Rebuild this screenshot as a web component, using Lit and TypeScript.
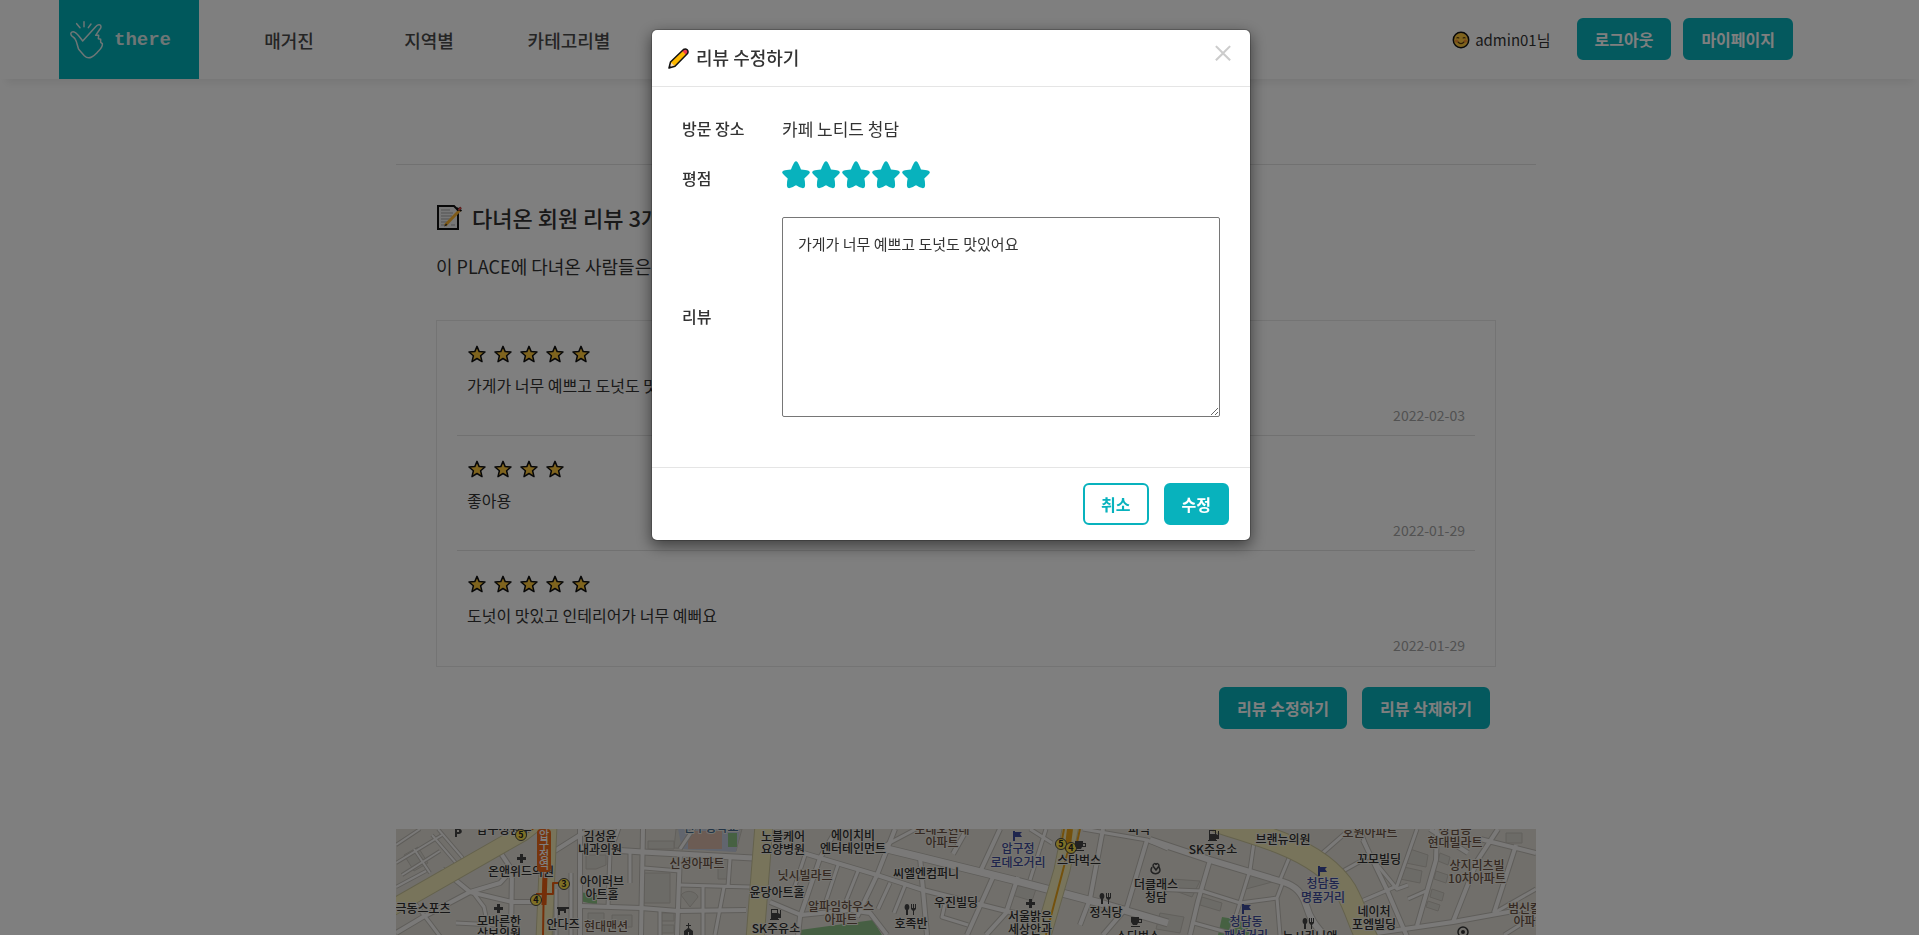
import { LitElement, html, svg, css } from "lit";
import { customElement, property, state } from "lit/decorators.js";

const sharedButton = css`
  .btn {
    box-sizing: border-box;
    height: 42px;
    padding: 0 16px;
    border: 2px solid #08b2bd;
    border-radius: 6px;
    background: #08b2bd;
    color: #fff;
    font: 700 16px/24px "Noto Sans CJK KR", sans-serif;
    cursor: pointer;
    white-space: nowrap;
  }
  .btn.outline {
    background: #fff;
    color: #08b2bd;
  }
`;

@customElement("site-header")
export class SiteHeader extends LitElement {
  static styles = [
    sharedButton,
    css`
      :host {
        display: flex;
        align-items: center;
        height: 79px;
        padding: 0 126px 0 59px;
        background: #fff;
        box-shadow: 0 10px 8px -6px rgba(0, 0, 0, 0.07);
      }
      .logo {
        display: flex;
        align-items: center;
        gap: 10px;
        box-sizing: border-box;
        width: 140px;
        height: 100%;
        padding-left: 10px;
        background: #00b1b8;
        color: #dcecec;
        font: 700 19px/24px "Liberation Mono", monospace;
        text-decoration: none;
      }
      .hand {
        width: 35px;
        height: 40px;
        fill: none;
        stroke: #dcecec;
        stroke-width: 4.5;
        stroke-linejoin: round;
        stroke-linecap: round;
      }
      nav {
        display: flex;
        flex: 1;
        margin-left: 20px;
      }
      nav a {
        width: 140px;
        text-align: center;
        color: #4a4a4a;
        font-size: 18px;
        font-weight: 500;
        line-height: 26px;
        text-decoration: none;
      }
      .user {
        display: flex;
        align-items: center;
        gap: 5px;
        margin-right: 26px;
        font-size: 15px;
        line-height: 24px;
      }
      .user svg {
        width: 18px;
        height: 18px;
      }
      .actions {
        display: flex;
        align-self: flex-start;
        gap: 12px;
        padding-top: 18px;
      }
    `,
  ];

  render() {
    return html`
      <a class="logo" href="#" aria-label="there">
        <svg class="hand" viewBox="42 60 105 120">
          <path
            d="M48 104C45 97 53 93 60 97C68 101 74 112 83 123L124 78C129 72 138 73 138 80C138 83 137 85 135 87L122 106L131 106L130 116L137 118L137 127L142 131C144 140 136 148 130 154C122 162 117 168 110 171C102 175 94 173 88 167L71 148C67 138 66 126 61 118C57 111 50 110 48 104Z"
          />
          <path d="M65 71L75 83M87 65V80M108 72L100 83" />
        </svg>
        there
      </a>
      <nav>
        <a href="#">매거진</a>
        <a href="#">지역별</a>
        <a href="#">카테고리별</a>
      </nav>
      <span class="user">
        <svg viewBox="0 0 18 18" aria-hidden="true">
          <circle cx="9" cy="9" r="7.7" fill="#ffc83d" stroke="#111" stroke-width="1.5" />
          <path
            d="M4.6 7.4Q5.8 5.6 7.2 7.4M10.8 7.4Q12.2 5.6 13.4 7.4M5.6 10.6Q9 14.6 12.4 10.6"
            fill="none"
            stroke="#5a3a10"
            stroke-width="1.1"
          />
          <circle cx="4.6" cy="10" r="1.6" fill="#f4782f" opacity=".7" />
          <circle cx="13.4" cy="10" r="1.6" fill="#f4782f" opacity=".7" />
        </svg>
        admin01님
      </span>
      <div class="actions">
        <button class="btn" type="button">로그아웃</button>
        <button class="btn" type="button">마이페이지</button>
      </div>
    `;
  }
}

interface Review {
  stars: number;
  text: string;
  date: string;
}

@customElement("review-list")
export class ReviewList extends LitElement {
  @property({ attribute: false }) reviews: Review[] = [];

  static styles = css`
    :host {
      display: block;
      padding: 0 20px;
      border: 1px solid #e8e8e8;
    }
    .item {
      display: flex;
      flex-direction: column;
      box-sizing: border-box;
      height: 115px;
      padding: 24px 10px 0;
      border-bottom: 1px solid #e3e3e3;
    }
    .item:last-child {
      border-bottom-color: transparent;
    }
    .stars {
      display: flex;
      gap: 8px;
      padding-left: 1px;
    }
    .stars svg {
      width: 18px;
      height: 18px;
    }
    p {
      margin: 10px 0 8px;
      font-size: 16px;
      line-height: 24px;
    }
    time {
      align-self: flex-end;
      color: #a4a4a4;
      font-size: 14px;
      line-height: 20px;
    }
  `;

  render() {
    return this.reviews.map(
      (r) => html`
        <article class="item">
          <div class="stars" role="img" aria-label="${r.stars}점">
            ${Array.from(
              { length: r.stars },
              () => html`<svg viewBox="0 0 18 18">
                <path
                  d="M9 1.4L11.2 6.6L17 7L12.6 10.8L14 16.6L9 13.5L4 16.6L5.4 10.8L1 7L6.8 6.6Z"
                  fill="#ffc83d"
                  stroke="#111"
                  stroke-width="1.5"
                  stroke-linejoin="round"
                />
              </svg>`
            )}
          </div>
          <p>${r.text}</p>
          <time>${r.date}</time>
        </article>
      `
    );
  }
}

const YELLOW_ROADS: [string, number][] = [
  ["M-6 80L127 4L140 -6", 15],
  ["M153 -4L148 110", 15],
  ["M368 -4L359 110", 17],
  ["M675 -4L666 41L646 110", 15],
  ["M820 -8C850 2 870 8 885 14C915 26 938 42 950 62C960 80 962 92 972 112", 21],
];

const ROADS: [string, number][] = [
  ["M487 19L524 28L617 51L704 74L772 94", 7],
  ["M484 19L520 0", 3],
  ["M374 14L424 29L481 46L527 61L614 83L640 88", 4],
  ["M754 11L814 31L887 53C900 57 906 64 910 76C914 90 920 98 930 108", 6],
  ["M967 106L1057 93L1140 78", 4],
  ["M967 11L991 61L1012 110", 4],
  ["M104 23L116 41L115 106", 4],
  ["M0 104L27 88L74 63L104 54L116 41", 4],
  ["M46 40L74 63L116 73L141 73", 4],
  ["M14 68L34 94L46 110", 3],
  ["M157 23L184 6L200 -4", 4],
  ["M184 0V106", 4],
  ["M184 19L247 23L357 29", 5],
  ["M247 0L245 106", 4],
  ["M214 24L212 78M234 24V54", 3],
  ["M185 77L245 79L282 82L350 81", 4],
  ["M284 24L281 106", 4],
  ["M248 39L284 42M284 56L354 58M334 30L332 58M328 58L319 106M307 58V106M264 80V106", 3],
  ["M300 -4L284 20M224 -4L214 24", 3],
  ["M441 0L424 29L404 88L402 106", 4],
  ["M499 0L481 46L461 88", 4],
  ["M524 28L527 61L531 106", 4],
  ["M374 73L405 86L454 81L474 84L491 106", 4],
  ["M410 23L396 66M442 36L428 78M462 42L446 82M510 54L498 84M494 54L482 80", 3],
  ["M557 25L571 0M585 41L604 0M597 48L571 106M622 48L610 84L590 106", 4],
  ["M650 0L634 51M634 0L656 14", 3],
  ["M707 0L694 70L684 96", 4],
  ["M751 11L731 78L707 106", 4],
  ["M687 0L751 11L772 20M550 70L546 88L572 96", 3],
  ["M814 31L802 72L794 106", 4],
  ["M854 41L858 13M884 51L896 22", 3],
  ["M754 60L806 62L844 74L881 69L884 106M881 69L887 53M854 41L834 106M798 94L834 104", 3],
  ["M921 29L954 0M947 42L974 27L966 6M961 74L1001 57L1021 0", 3],
  ["M1041 0L1040 31L1021 97M1034 0L1072 24M1102 0L1081 32L1057 93M1084 10L1140 24M1120 16L1098 84", 4],
  ["M1098 84L1140 60M1012 70L1030 62M1108 106L1140 86M974 27L1001 60L1012 56", 3],
  ["M42 0L66 28C70 34 64 38 60 34L36 6", 2],
  ["M0 16L24 0M0 34L46 6M6 46L44 22M0 58L30 42M18 20L34 44", 2],
  ["M76 62L88 78L94 106M60 94L100 96M160 60V106M175 44V106", 3],
];

const BUILDINGS = [
  "M280 0L278 19L340 22L346 0Z",
  "M190 26H210V36L200 40H190Z",
  "M192 84H208V96H192ZM216 86H236V98H216Z",
  "M285 66C290 60 300 62 302 68L294 78Z",
  "M246 44H274V74H248Z",
  "M252 12H278V20H252Z",
  "M322 30H332V50H322Z",
  "M265 84H278V92H265ZM265 96H278V104H265Z",
  "M618 56L640 60L636 72L616 66Z",
  "M776 50L804 52L796 68L774 60Z",
  "M806 68L826 74L824 82L804 76Z",
  "M764 84L788 88L784 104L760 100Z",
  "M850 60L856 40L880 52Z",
  "M1014 20L1032 26L1030 38L1010 34ZM1008 38L1026 42L1024 54L1004 50Z",
  "M1044 24L1054 28L1052 36L1042 32ZM1040 42L1052 46L1050 54L1038 50ZM1036 60L1048 64L1046 72L1034 68ZM1032 72L1044 76L1042 82L1030 78Z",
  "M1110 4H1126V14H1110Z",
  "M8 26L22 18L32 34L18 42Z",
];

const INK = "#2e2e2e";
const BROWN = "#6b5344";
const BLUE = "#3d4a9a";

// x, y (baseline), text, colour
const LABELS: [number, number, string, string][] = [
  [108, 5, "압구정원두", INK],
  [125, 47, "온앤위드의원", INK],
  [27, 84, "극동스포츠", INK],
  [103, 97, "모바른한", INK],
  [103, 109, "삼보의원", INK],
  [204, 12, "김성윤", INK],
  [204, 25, "내과의원", INK],
  [206, 57, "아이러브", INK],
  [206, 70, "아트홀", INK],
  [167, 100, "안다즈", INK],
  [210, 102, "현대맨션", BROWN],
  [301, 39, "신성아파트", BROWN],
  [315, 3, "신구중학교", "#44688c"],
  [387, 12, "노블케어", INK],
  [387, 25, "요양병원", INK],
  [381, 68, "윤당아트홀", INK],
  [380, 104, "SK주유소", INK],
  [457, 11, "에이치비", INK],
  [457, 24, "엔터테인먼트", INK],
  [409, 51, "닛시빌라트", BROWN],
  [445, 82, "알파임하우스", BROWN],
  [445, 95, "아파트", BROWN],
  [515, 99, "호족반", INK],
  [546, 5, "로데오현대", BROWN],
  [546, 18, "아파트", BROWN],
  [530, 49, "씨엘엔컴퍼니", INK],
  [560, 78, "우진빌딩", INK],
  [622, 24, "압구정", BLUE],
  [622, 38, "로데오거리", BLUE],
  [634, 92, "서울밝은", INK],
  [634, 105, "세상안과", INK],
  [683, 36, "스타벅스", INK],
  [743, 5, "피넉", INK],
  [760, 60, "더클래스", INK],
  [760, 73, "청담", INK],
  [710, 88, "정식당", INK],
  [742, 112, "스타벅스", INK],
  [817, 25, "SK주유소", INK],
  [887, 15, "브랜뉴의원", INK],
  [974, 8, "호원아파트", BROWN],
  [983, 35, "꼬모빌딩", INK],
  [1059, 5, "청담동", BROWN],
  [1059, 18, "현대빌라트", BROWN],
  [1081, 41, "상지리츠빌", BROWN],
  [1081, 54, "10차아파트", BROWN],
  [927, 59, "청담동", BLUE],
  [927, 73, "명품거리", BLUE],
  [850, 97, "청담동", BLUE],
  [850, 111, "패션거리", BLUE],
  [978, 87, "네이처", INK],
  [978, 100, "포엠빌딩", INK],
  [914, 112, "뉴시카나앤", INK],
  [1134, 84, "범신칼라", BROWN],
  [1134, 97, "아파트", BROWN],
];

const EXITS: [number, number, string][] = [
  [125, 6, "5"],
  [168, 55, "3"],
  [140, 71, "4"],
  [665, 15, "5"],
  [675, 19, "4"],
];

@customElement("place-map")
export class PlaceMap extends LitElement {
  static styles = css`
    :host {
      display: block;
      overflow: hidden;
      background: #e2dfd7;
    }
    svg {
      display: block;
      width: 100%;
    }
    .road {
      fill: none;
      stroke-linejoin: round;
    }
    .name {
      font: 500 12px "Noto Sans CJK KR", sans-serif;
      text-anchor: middle;
      paint-order: stroke;
      stroke: #ebe8e0;
      stroke-width: 2;
      stroke-linejoin: round;
    }
    .exit {
      font: 700 9px "Noto Sans CJK KR", sans-serif;
      text-anchor: middle;
      fill: #222;
    }
    .station {
      font: 500 11px "Noto Sans CJK KR", sans-serif;
      text-anchor: middle;
      fill: #fff;
    }
  `;

  private road(list: [string, number][], edge: string, fill: string) {
    return svg`
      ${list.map(([d, w]) => svg`<path class="road" d=${d} stroke=${edge} stroke-width=${w + 2}></path>`)}
      ${list.map(([d, w]) => svg`<path class="road" d=${d} stroke=${fill} stroke-width=${w}></path>`)}
    `;
  }

  private icon(x: number, y: number, d: string, fill = "#444") {
    return svg`<path d=${d} fill=${fill} transform="translate(${x} ${y})"></path>`;
  }

  render() {
    const cross = "M3 0H6V3H9V6H6V9H3V6H0V3H3Z";
    const cup = "M0 0H8V2H11V6H7L6 8H2L0 5ZM8 3V5H10V3ZM0 9H9V10H0Z";
    const fork = "M2 0C5 0 5 5 3 6V11H1V6C-1 5-1 0 2 0ZM6 0H7V4H8V0H9V4H10V0H11V5L9 7V11H8V7L6 5Z";
    const pump = "M0 0H7V4L9 5V1H10V9H7V10H8V11H-1V10H0ZM1 1V4H6V1Z";
    const flag = "M0 0H2V1H9L7 3L9 6H2V10H0Z";
    return html`
      <svg viewBox="0 0 1140 106" role="img" aria-label="지도">
        <rect width="1140" height="106" fill="#e2dfd7" />
        ${BUILDINGS.map((d) => svg`<path d=${d} fill="#d9d6ce" stroke="#c4c0b8" stroke-width="1"></path>`)}
        <path d="M282 0L286 20L340 23L344 0Z" fill="#c3cbdc" />
        <path d="M292 2H326V20H292Z" fill="#d8b8a8" />
        <path d="M332 4H341V18H332ZM184 63L201 66V76L184 72ZM826 88L850 92L854 106H822Z" fill="#8cc384" />
        <path d="M404 101L477 91L486 106H403Z" fill="#8cbf86" />
        ${this.road(ROADS, "#bfbbb4", "#f4f3f1")}
        ${this.road(YELLOW_ROADS, "#c9c39a", "#f0e9b6")}
        <path class="road" d="M148 0V46L147 106" stroke="#ea5f12" stroke-width="2" />
        <path class="road" d="M149 46L148 76" stroke="#ea5f12" stroke-width="5" />
        <path class="road" d="M140 65H157V54H166M132 3L142 -4" stroke="#ea5f12" stroke-width="2" />
        <path class="road" d="M668 0L665 16L672 22L680 18L684 0M672 22L650 106" stroke="#e9a31a" stroke-width="2" />
        <path class="road" d="M674 0L672 16" stroke="#e9a31a" stroke-width="6" />
        ${LABELS.map(([x, y, t, c]) => svg`<text class="name" x=${x} y=${y} fill=${c}>${t}</text>`)}
        <rect x="141" y="0" width="14" height="43" rx="4" fill="#ee6a1c" />
        ${["압", "구", "정", "역"].map(
          (c, i) => svg`<text class="station" x="148" y=${10 + i * 10}>${c}</text>`
        )}
        ${EXITS.map(
          ([x, y, n]) => svg`
            <circle cx=${x} cy=${y} r="5.5" fill="#ffe14a" stroke="#444" stroke-width="1"></circle>
            <text class="exit" x=${x} y=${y + 3}>${n}</text>`
        )}
        ${this.icon(121, 25, cross)} ${this.icon(98, 75, cross)} ${this.icon(630, 70, cross)}
        ${this.icon(161, 78, "M0 0H12V2H9V6H7V4H3V8H1V2H0Z")}
        ${this.icon(287, 94, "M5 0H6V2H8V3H6V5L10 8V12H6V9H5V12H1V8L5 5V3H3V2H5Z")}
        ${this.icon(59, 0, "M0 0H5C8 1 7 5 4 5H2V8H0ZM2 1V3H4V1Z")}
        ${this.icon(375, 80, pump)} ${this.icon(813, 1, pump)}
        ${this.icon(509, 75, fork)} ${this.icon(704, 64, fork)} ${this.icon(907, 89, fork)}
        ${this.icon(679, 12, cup)} ${this.icon(735, 88, cup)}
        ${this.icon(617, 2, flag, BLUE)} ${this.icon(922, 37, flag, BLUE)}
        ${this.icon(846, 75, flag, BLUE)}
        <path
          d="M756 38C751 47 768 47 763 38M760 41L757 37C757 34 760 34 760 36C760 34 763 34 763 37Z"
          fill="none"
          stroke="#444"
          stroke-width="1.5"
        />
        <circle cx="1067" cy="103" r="5" fill="none" stroke="#333" stroke-width="1.5" />
        <circle cx="1067" cy="103" r="2" fill="#333" />
      </svg>
    `;
  }
}

@customElement("review-dialog")
export class ReviewDialog extends LitElement {
  @state() private rating = 5;

  static styles = [
    sharedButton,
    css`
      :host {
        position: fixed;
        inset: 0;
        box-sizing: border-box;
        padding: 29px 17px 0 0;
        background: rgba(0, 0, 0, 0.5);
      }
      .dialog {
        box-sizing: border-box;
        max-width: 600px;
        margin: 0 auto;
        border: 1px solid rgba(0, 0, 0, 0.2);
        border-radius: 6px;
        background: #fff;
        background-clip: padding-box;
        box-shadow: 0 5px 15px rgba(0, 0, 0, 0.5);
        color: #333;
      }
      header {
        display: flex;
        align-items: center;
        gap: 7px;
        height: 56px;
        padding: 0 15px 0 16px;
        border-bottom: 1px solid #e5e5e5;
      }
      header svg {
        width: 21px;
        height: 21px;
      }
      h4 {
        flex: 1;
        margin: 0;
        padding-bottom: 2px;
        font-size: 18px;
        font-weight: 500;
        line-height: 26px;
      }
      .close {
        height: 36px;
        margin-bottom: 12px;
        padding: 0;
        border: 0;
        background: none;
        color: #ccc;
        font: 500 24px/36px "Noto Sans CJK KR", sans-serif;
        cursor: pointer;
      }
      .form {
        display: grid;
        grid-template-columns: 100px 1fr;
        grid-template-rows: 24px 48px auto;
        row-gap: 14px;
        align-items: center;
        margin: 0;
        padding: 30px 30px 50px;
      }
      .label {
        padding-bottom: 1px;
        font-size: 16px;
        font-weight: 500;
        line-height: 23px;
      }
      .place {
        font-size: 17px;
        line-height: 24px;
      }
      .rating {
        display: flex;
        align-self: start;
        gap: 2px;
        padding-top: 6px;
      }
      .rating label {
        display: grid;
        cursor: pointer;
      }
      .rating input,
      .rating svg {
        grid-area: 1 / 1;
        width: 28px;
        height: 28px;
        margin: 0;
      }
      .rating input {
        opacity: 0;
      }
      .rating path {
        fill: #ddd;
      }
      .rating .on path {
        fill: #08b2bd;
      }
      textarea {
        display: block;
        box-sizing: border-box;
        width: 100%;
        height: 200px;
        padding: 15px;
        border: 1px solid #767676;
        border-radius: 2px;
        background: #fff;
        color: #333;
        font: 400 15px/22px "Noto Sans CJK KR", sans-serif;
      }
      footer {
        display: flex;
        justify-content: flex-end;
        gap: 15px;
        padding: 15px 21px;
        border-top: 1px solid #e5e5e5;
      }
    `,
  ];

  render() {
    return html`
      <div class="dialog" role="dialog" aria-labelledby="title">
        <header>
          <svg viewBox="0 0 21 21" aria-hidden="true">
            <path d="M1 20L2.5 14L14.5 2.2L18.8 6.5L7 18.3Z" fill="#ffb900" />
            <path d="M1 20L2.5 14L7 18.3Z" fill="#f7d9b8" />
            <path d="M14 2.8L16 1Q17.5 0.5 19 2Q20.5 3.5 20 5L18.2 7Z" fill="#f03a4a" />
            <path
              d="M1 20L2.5 14L15.5 1.5Q17.5 0.3 19.2 1.8Q20.7 3.5 19.5 5.5L7 18.3Z"
              fill="none"
              stroke="#111"
              stroke-width="1.5"
              stroke-linejoin="round"
            />
            <path d="M0.8 20.2L1.5 17.5L3.5 19.5Z" fill="#111" />
          </svg>
          <h4 id="title">리뷰 수정하기</h4>
          <button class="close" type="button" aria-label="닫기">×</button>
        </header>
        <div class="form">
          <span class="label">방문 장소</span>
          <span class="place">카페 노티드 청담</span>
          <span class="label" id="rating-label">평점</span>
          <div class="rating" role="radiogroup" aria-labelledby="rating-label">
            ${[1, 2, 3, 4, 5].map(
              (n) => html`<label class=${n <= this.rating ? "on" : ""}>
                <input
                  type="radio"
                  name="rating"
                  aria-label="${n}점"
                  .checked=${n === this.rating}
                  @change=${() => (this.rating = n)}
                />
                <svg viewBox="0 0 28 28">
                  <path
                    d="M12.4 1.2Q14 -0.8 15.6 1.2C17 3.5 18 5.5 19 8.5C22 8.7 24.5 9 26.6 9.7Q28.6 10.8 27.3 12.6C26 14.5 24 16 22.3 17.5C23 20.5 23.2 22.7 23 25.2Q22.5 27.4 20.3 27.1C18 26.5 16 25.3 14 24.2C12 25.3 10 26.5 7.7 27.1Q5.5 27.4 5 25.2C4.8 22.7 5 20.5 5.7 17.5C4 16 2 14.5 0.7 12.6Q-0.6 10.8 1.4 9.7C3.5 9 6 8.7 9 8.5C10 5.5 11 3.5 12.4 1.2Z"
                  />
                </svg>
              </label>`
            )}
          </div>
          <label class="label" for="review-text">리뷰</label>
          <textarea id="review-text" .value=${"가게가 너무 예쁘고 도넛도 맛있어요"}></textarea>
        </div>
        <footer>
          <button class="btn outline" type="button">취소</button>
          <button class="btn" type="button">수정</button>
        </footer>
      </div>
    `;
  }
}

@customElement("app-root")
export class AppRoot extends LitElement {
  private reviews: Review[] = [
    { stars: 5, text: "가게가 너무 예쁘고 도넛도 맛있어요", date: "2022-02-03" },
    { stars: 4, text: "좋아용", date: "2022-01-29" },
    { stars: 5, text: "도넛이 맛있고 인테리어가 너무 예뻐요", date: "2022-01-29" },
  ];

  static styles = [
    sharedButton,
    css`
      :host {
        display: flex;
        flex-direction: column;
        height: 100vh;
        overflow: hidden;
        background: #fff;
        color: #333;
        font-family: "Noto Sans CJK KR", sans-serif;
      }
      main {
        box-sizing: border-box;
        width: 100%;
        max-width: 1153px;
        margin: 85px auto 0;
        padding-left: 13px;
      }
      .reviews {
        padding: 36px 40px 100px;
        border-top: 1px solid #e3e3e3;
      }
      h2 {
        display: flex;
        align-items: center;
        gap: 9px;
        margin: 0;
        font-size: 22px;
        font-weight: 500;
        line-height: 32px;
      }
      h2 svg {
        width: 27px;
        height: 27px;
      }
      .sub {
        margin: 20px 0 41px;
        font-size: 18px;
        line-height: 26px;
      }
      .actions {
        display: flex;
        justify-content: flex-end;
        gap: 15px;
        margin: 20px 6px 0 0;
      }
    `,
  ];

  render() {
    return html`
      <site-header></site-header>
      <main>
        <section class="reviews">
          <h2>
            <svg viewBox="0 0 27 27" aria-hidden="true">
              <path d="M2 2H18L22 6V25H2Z" fill="#eee" stroke="#111" stroke-width="2" />
              <path
                d="M5 6H14M5 9H17M5 12H16M5 15H14M5 18H12M5 21H10M15 21H19"
                stroke="#a5a5a5"
                stroke-width="1"
              />
              <path d="M9 21.5L24 6" stroke="#ffb52e" stroke-width="3" />
              <path d="M8 22.5L10 19.5L11.5 21Z" fill="#333" />
              <path d="M21 6.5L25 3.5M21 4L25.5 7" stroke="#111" stroke-width="2" />
              <path d="M22.5 6L25 3.5" stroke="#d44" stroke-width="2" />
            </svg>
            다녀온 회원 리뷰 3개
          </h2>
          <p class="sub">이 PLACE에 다녀온 사람들은 이렇게 느꼈어요</p>
          <review-list .reviews=${this.reviews}></review-list>
          <div class="actions">
            <button class="btn" type="button">리뷰 수정하기</button>
            <button class="btn" type="button">리뷰 삭제하기</button>
          </div>
        </section>
        <place-map></place-map>
      </main>
      <review-dialog></review-dialog>
    `;
  }
}
